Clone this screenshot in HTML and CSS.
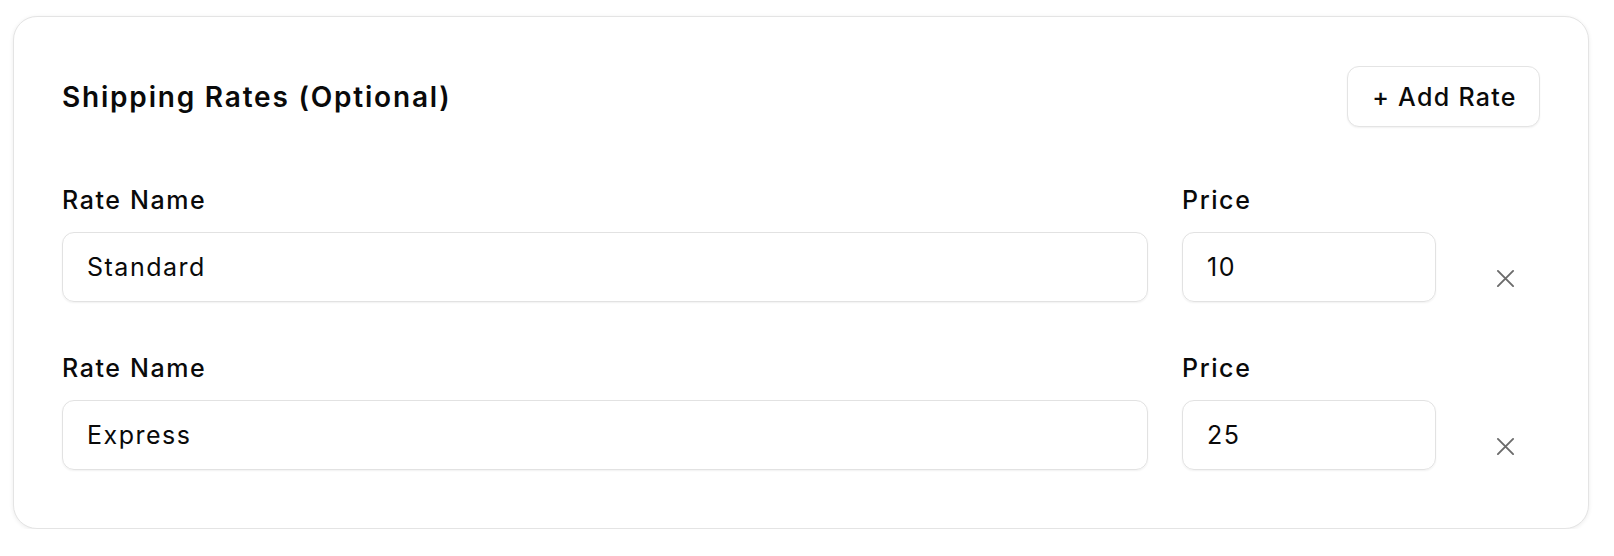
FILE: index.html
```html
<!DOCTYPE html>
<html>
<head>
<meta charset="utf-8">
<link rel="stylesheet" href="styles.css">
</head>
<body>
<div class="card">
  <div class="header">
    <h2 class="title">Shipping Rates (Optional)</h2>
    <button class="add-btn">+ Add Rate</button>
  </div>
  <div class="rates">
    <div class="rate-row">
      <div class="field name-field">
        <label class="label">Rate Name</label>
        <div class="input">Standard</div>
      </div>
      <div class="field price-field">
        <label class="label">Price</label>
        <div class="input">10</div>
      </div>
      <button class="remove-btn" aria-label="Remove">
        <svg width="20" height="20" viewBox="0 0 20 20" fill="none" stroke="currentColor" stroke-width="2" stroke-linecap="round"><path d="M2 2L18 18M18 2L2 18"/></svg>
      </button>
    </div>
    <div class="rate-row">
      <div class="field name-field">
        <label class="label">Rate Name</label>
        <div class="input">Express</div>
      </div>
      <div class="field price-field">
        <label class="label">Price</label>
        <div class="input">25</div>
      </div>
      <button class="remove-btn" aria-label="Remove">
        <svg width="20" height="20" viewBox="0 0 20 20" fill="none" stroke="currentColor" stroke-width="2" stroke-linecap="round"><path d="M2 2L18 18M18 2L2 18"/></svg>
      </button>
    </div>
  </div>
</div>
</body>
</html>
```

FILE: styles.css
```css
* { box-sizing: border-box; }
html, body { margin: 0; padding: 0; background: #ffffff; }
body {
  font-family: Inter, "Noto Sans", "Liberation Sans", sans-serif;
  color: #0a0a0a;
  padding: 16px 25px 0 13px;
}
.card {
  border: 1px solid #e4e4e4;
  border-radius: 24px;
  background: #fff;
  box-shadow: 0 1px 4px rgba(0,0,0,0.08);
  padding: 49px 48px 48px 48px;
  height: 513px;
}
.header {
  display: flex;
  align-items: center;
  justify-content: space-between;
  height: 61px;
}
.title {
  margin: 0;
  font-size: 28px;
  font-weight: 600;
  letter-spacing: 1.8px;
}
.add-btn {
  font-family: inherit;
  font-size: 25px;
  font-weight: 500;
  letter-spacing: 1.3px;
  color: #0a0a0a;
  background: #fff;
  border: 1px solid #e4e4e4;
  border-radius: 12px;
  box-shadow: 0 1px 2px rgba(0,0,0,0.06);
  height: 61px;
  width: 193px;
  padding: 0 0 0 2px;
}
.rates {
  display: flex;
  flex-direction: column;
  gap: 51px;
  margin-top: 58px;
}
.rate-row {
  display: flex;
  align-items: flex-end;
  gap: 34px;
}
.field {
  display: flex;
  flex-direction: column;
  gap: 17px;
}
.name-field { flex: 1; }
.price-field { width: 254px; }
.label {
  font-size: 25px;
  line-height: 30px;
  font-weight: 500;
  letter-spacing: 1.6px;
}
.input {
  height: 70px;
  border: 1px solid #e2e2e2;
  border-radius: 12px;
  box-shadow: 0 1px 2px rgba(0,0,0,0.06);
  padding: 0 24px;
  display: flex;
  align-items: center;
  font-size: 25px;
  letter-spacing: 1.5px;
}
.remove-btn {
  width: 70px;
  height: 48px;
  border: none;
  background: transparent;
  color: #6b6b6b;
  display: flex;
  align-items: center;
  justify-content: center;
  padding: 0;
}
.remove-btn svg { width: 19px; height: 19px; }
```
